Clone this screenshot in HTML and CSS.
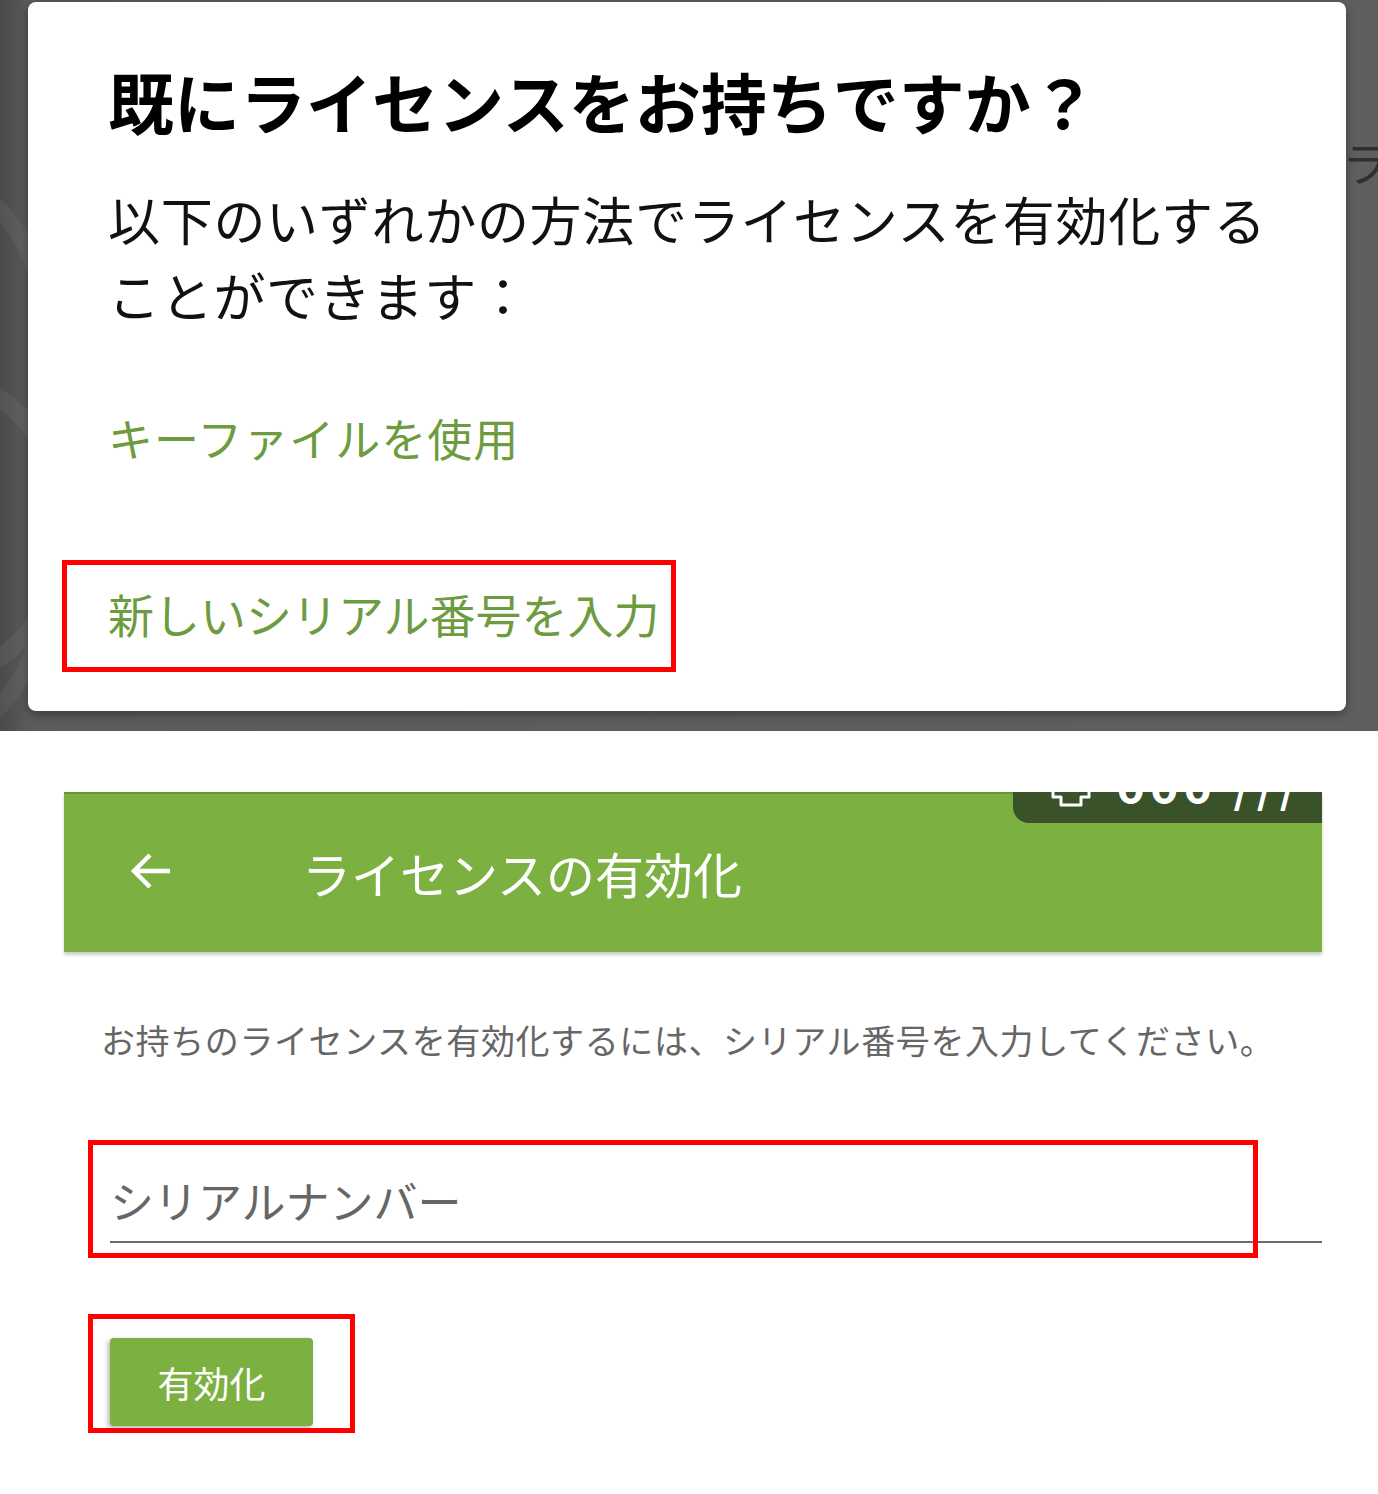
FILE: index.html
```html
<!DOCTYPE html>
<html lang="ja">
<head>
    <meta charset="UTF-8">
    <meta name="viewport" content="width=device-width, initial-scale=1.0">
    <title>ライセンスの有効化</title>
    <link rel="stylesheet" href="styles.css">
</head>
<body>
    <div class="backdrop">
        <span class="swirl swirl-a"></span>
        <span class="swirl swirl-b"></span>
        <span class="behind-text">ライセンス</span>
        <div class="dialog">
            <h1 class="dialog-title">既にライセンスをお持ちですか？</h1>
            <p class="dialog-text">以下のいずれかの方法でライセンスを有効化することができます：</p>
            <div class="dialog-link">キーファイルを使用</div>
            <div class="dialog-link marked">
                新しいシリアル番号を入力
                <span class="mark mark-link"></span>
            </div>
        </div>
    </div>

    <div class="screen">
        <div class="app">
            <header class="app-bar">
                <div class="promo">
                    <div class="promo-inner">
                        <svg class="promo-icon" width="44" height="40" viewBox="0 0 44 40">
                            <path d="M4 14h36v16H32v8H12v-8H4z" fill="none" stroke="#fff" stroke-width="3" stroke-linejoin="round"/>
                        </svg>
                        <span class="promo-text">ooo ///</span>
                    </div>
                </div>
                <svg class="back" width="44" height="40" viewBox="0 0 44 40">
                    <path d="M42 20H6M22 4L6 20l16 16" fill="none" stroke="#fff" stroke-width="4.5"/>
                </svg>
                <div class="app-title">ライセンスの有効化</div>
            </header>

            <p class="hint">お持ちのライセンスを有効化するには、シリアル番号を入力してください。</p>

            <div class="field">
                <input class="serial" type="text" placeholder="シリアルナンバー">
                <span class="mark mark-field"></span>
            </div>

            <div class="actions">
                <button class="activate">有効化</button>
                <span class="mark mark-button"></span>
            </div>
        </div>
    </div>
</body>
</html>
```

FILE: styles.css
```css
body {
    margin: 0;
    background: #fff;
    font-family: "Noto Sans CJK JP", "Noto Sans", sans-serif;
}
.backdrop {
    position: relative;
    height: 731px;
    padding: 2px 0 0 28px;
    box-sizing: border-box;
    overflow: hidden;
    background: linear-gradient(90deg, #4a4a4a 0, #5a5a5a 28px, #5f5f5f 100%);
}
.swirl {
    position: absolute;
    border-radius: 50%;
    border: 18px solid rgba(255, 255, 255, 0.05);
}
.swirl-a {
    left: -160px;
    top: 180px;
    width: 200px;
    height: 520px;
}
.swirl-b {
    left: -260px;
    top: 360px;
    width: 300px;
    height: 300px;
    transform: rotate(30deg);
}
.behind-text {
    position: absolute;
    left: 1342px;
    top: 128px;
    font-size: 46px;
    color: #2f2f2f;
    white-space: nowrap;
}
.dialog {
    position: relative;
    width: 1318px;
    height: 709px;
    box-sizing: border-box;
    padding: 58px 80px 0 80px;
    background: #fff;
    border-radius: 8px;
    box-shadow: 0 3px 10px rgba(0, 0, 0, 0.35);
}
.dialog-title {
    margin: 0;
    font-size: 66px;
    line-height: 80px;
    font-weight: 700;
    color: #000;
}
.dialog-text {
    margin: 41px 0 0;
    width: 1170px;
    font-size: 52px;
    line-height: 76px;
    letter-spacing: 0.7px;
    color: #111;
}
.dialog-link {
    margin-top: 75px;
    font-size: 45px;
    line-height: 60px;
    letter-spacing: 1px;
    color: #6c9b40;
}
.dialog-link.marked {
    position: relative;
    margin-top: 115px;
    width: max-content;
    font-size: 46px;
    letter-spacing: 0;
}
.mark {
    position: absolute;
    border: 5px solid #ff0000;
}
.mark-link {
    left: -46px;
    top: -23px;
    width: 604px;
    height: 102px;
}
.screen {
    padding: 61px 56px 68px 64px;
}
.app {
    width: 1258px;
}
.app-bar {
    position: relative;
    display: flex;
    align-items: center;
    height: 160px;
    box-sizing: border-box;
    border-top: 2px solid #66962f;
    background: #7cb142;
    box-shadow: 0 3px 3px rgba(0, 0, 0, 0.2);
    color: #fff;
}
.back {
    margin-left: 64px;
    margin-top: -4px;
}
.app-title {
    margin-left: 130px;
    font-size: 49px;
    line-height: 60px;
}
.promo {
    position: absolute;
    right: 0;
    top: -2px;
    width: 309px;
    height: 31px;
    overflow: hidden;
    background: #3a5229;
    border-bottom-left-radius: 16px;
}
.promo-inner {
    display: flex;
    align-items: center;
    gap: 24px;
    margin: -31px 0 0 36px;
}
.promo-icon {
    margin-top: 6px;
}
.promo-text {
    font-size: 44px;
    font-weight: 700;
    line-height: 40px;
    letter-spacing: 6px;
}
.hint {
    margin: 64px 0 0 37px;
    font-size: 34px;
    line-height: 48px;
    letter-spacing: 0.6px;
    color: #666;
}
.field {
    position: relative;
    margin: 76px 0 0 46px;
    padding-top: 30px;
}
.serial {
    display: block;
    width: 100%;
    box-sizing: border-box;
    padding: 0 0 11px;
    border: 0;
    border-bottom: 2px solid #6b6b6b;
    outline: none;
    font-family: inherit;
    font-size: 44px;
    line-height: 60px;
    color: #222;
    background: transparent;
}
.serial::placeholder {
    color: #666;
}
.mark-field {
    left: -22px;
    top: 0;
    width: 1160px;
    height: 108px;
}
.actions {
    position: relative;
    margin: 95px 0 0 46px;
    width: 203px;
}
.activate {
    display: block;
    width: 203px;
    height: 88px;
    border: 0;
    border-radius: 4px;
    background: #7cb142;
    color: #fff;
    font-family: inherit;
    font-size: 36px;
    box-shadow: -2px 2px 5px rgba(0, 0, 0, 0.3);
}
.mark-button {
    left: -22px;
    top: -24px;
    width: 257px;
    height: 109px;
}
```
